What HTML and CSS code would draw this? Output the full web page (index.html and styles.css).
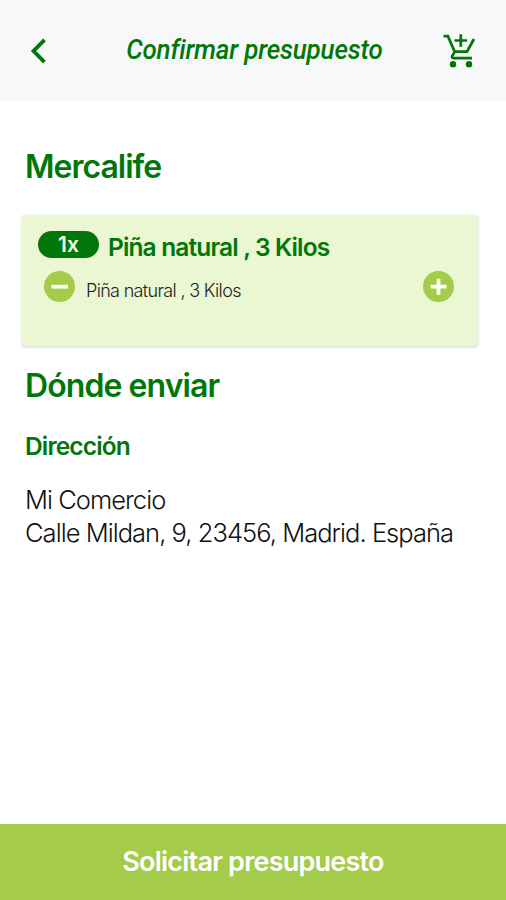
FILE: index.html
```html
<!DOCTYPE html>
<html lang="es">
<head>
    <meta charset="UTF-8">
    <meta name="viewport" content="width=device-width, initial-scale=1">
    <title>Confirmar presupuesto</title>
    <link rel="stylesheet" href="styles.css">
</head>
<body>
    <header class="top-bar">
        <button class="icon-button" aria-label="Volver">
            <svg width="16" height="26" viewBox="0 0 16 26"><path d="M14.5 1.8 L3.5 13 L14.5 24.2" fill="none" stroke="currentColor" stroke-width="3.8"/></svg>
        </button>
        <h1 class="title">Confirmar presupuesto</h1>
        <button class="icon-button" aria-label="Carrito">
            <svg width="34" height="36" viewBox="0 0 34 36" fill="none" stroke="currentColor" stroke-width="2.7">
                <path d="M0.5 3.2 H4.9 L11.6 18.6 H24 L31 6"/>
                <path d="M12 18.4 L9.2 23 Q8.4 25.2 11 25.2 H29"/>
                <path d="M17.8 1.2 V13.8 M11.5 7.5 H24.1"/>
                <circle cx="10" cy="31.2" r="3.2" fill="currentColor" stroke="none"/>
                <circle cx="26" cy="31.2" r="3.2" fill="currentColor" stroke="none"/>
            </svg>
        </button>
    </header>

    <main class="content">
        <h2 class="shop">Mercalife</h2>

        <div class="card">
            <div class="card-head">
                <span class="quantity">1x</span>
                <h3 class="product">Piña natural , 3 Kilos</h3>
            </div>
            <div class="card-row">
                <button class="round" aria-label="Quitar">
                    <svg width="31" height="31" viewBox="0 0 31 31"><path d="M7.5 15.7 H24" stroke="currentColor" stroke-width="3.8"/></svg>
                </button>
                <p class="detail">Piña natural , 3 Kilos</p>
                <button class="round" aria-label="Añadir">
                    <svg width="31" height="31" viewBox="0 0 31 31"><path d="M7.5 15.7 H23.5 M15.5 7.7 V23.7" stroke="currentColor" stroke-width="3.8"/></svg>
                </button>
            </div>
        </div>

        <h2 class="send">Dónde enviar</h2>
        <h3 class="label">Dirección</h3>
        <p class="address">Mi Comercio<br>Calle Mildan, 9, 23456, Madrid. España</p>
    </main>

    <button class="submit">Solicitar presupuesto</button>
</body>
</html>
```

FILE: styles.css
```css
* {
    box-sizing: border-box;
    margin: 0;
    padding: 0;
}
body {
    display: flex;
    flex-direction: column;
    height: 100vh;
    background-color: #fff;
    color: #007708;
    font-family: Inter, "Liberation Sans", sans-serif;
    white-space: nowrap;
}
button {
    border: none;
    background: none;
    color: inherit;
    font-family: inherit;
    cursor: pointer;
}
svg {
    display: block;
}
.top-bar {
    display: flex;
    align-items: center;
    justify-content: space-between;
    height: 101px;
    padding: 0 29px 0 30px;
    background-color: #f6f8fa;
}
.title {
    padding: 0 0 3px 21px;
    font-family: Roboto, sans-serif;
    font-size: 28px;
    font-style: italic;
    font-weight: 500;
    letter-spacing: -0.2px;
    transform: scaleX(0.928);
}
.content {
    flex-grow: 1;
    padding: 46px 28px 0 22px;
}
.shop, .send {
    padding-left: 3px;
    font-size: 32px;
    font-weight: 600;
    line-height: 40px;
    letter-spacing: -1px;
}
.card {
    height: 131px;
    margin-top: 28px;
    padding: 16px 24px 0 16px;
    border-radius: 2px;
    background-color: #ebf6d2;
    box-shadow: 0 1px 3px rgba(0, 0, 0, 0.18);
}
.card-head {
    display: flex;
    gap: 9px;
}
.quantity {
    width: 61px;
    height: 27px;
    border-radius: 14px;
    background-color: #007708;
    color: #eefbe8;
    font-size: 21px;
    font-weight: 600;
    line-height: 27px;
    text-align: center;
}
.product, .label {
    font-size: 24.5px;
    font-weight: 600;
    line-height: 32px;
    letter-spacing: -0.86px;
}
.card-row {
    display: flex;
    align-items: center;
    margin-top: 8px;
    padding-left: 6px;
}
.round {
    width: 31px;
    height: 31px;
    border-radius: 50%;
    background-color: #a4cb49;
    color: #fff;
}
.detail {
    flex-grow: 1;
    padding: 7px 0 0 11px;
    color: #222;
    font-size: 18px;
    font-weight: 300;
    letter-spacing: -0.67px;
}
.send {
    margin-top: 20px;
    letter-spacing: -0.92px;
}
.label {
    margin-top: 24px;
    padding-left: 3px;
}
.address {
    margin-top: 21px;
    padding-left: 3px;
    color: #111;
    font-size: 25.5px;
    font-weight: 300;
    line-height: 33px;
    letter-spacing: -0.96px;
}
.submit {
    height: 76px;
    padding-bottom: 2px;
    background-color: #a4cb49;
    color: #fff;
    font-size: 27px;
    font-weight: 600;
    letter-spacing: -0.78px;
}
```
